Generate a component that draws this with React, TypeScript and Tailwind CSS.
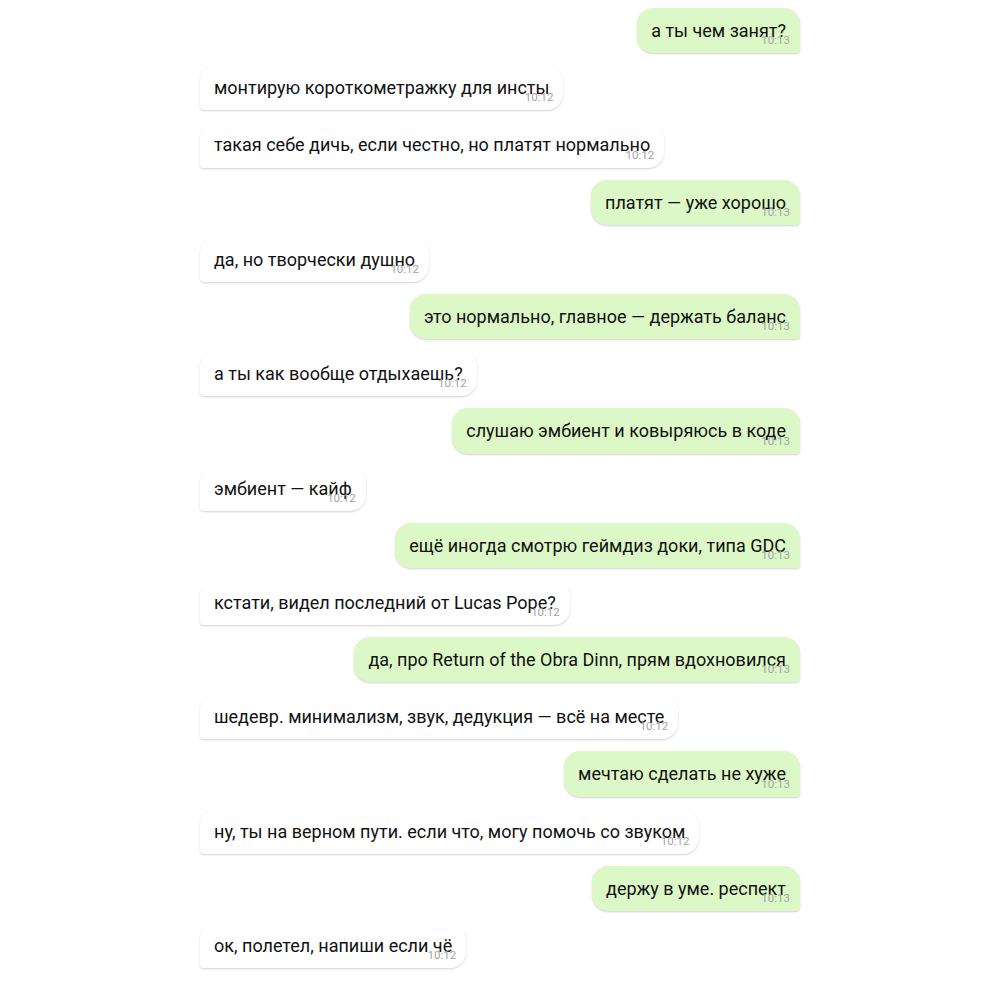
import React from "react";

type Msg = { text: string; time: string; out: boolean };

const messages: Msg[] = [
  { text: "а ты чем занят?", time: "10:13", out: true },
  { text: "монтирую короткометражку для инсты", time: "10:12", out: false },
  { text: "такая себе дичь, если честно, но платят нормально", time: "10:12", out: false },
  { text: "платят — уже хорошо", time: "10:13", out: true },
  { text: "да, но творчески душно", time: "10:12", out: false },
  { text: "это нормально, главное — держать баланс", time: "10:13", out: true },
  { text: "а ты как вообще отдыхаешь?", time: "10:12", out: false },
  { text: "слушаю эмбиент и ковыряюсь в коде", time: "10:13", out: true },
  { text: "эмбиент — кайф", time: "10:12", out: false },
  { text: "ещё иногда смотрю геймдиз доки, типа GDC", time: "10:13", out: true },
  { text: "кстати, видел последний от Lucas Pope?", time: "10:12", out: false },
  { text: "да, про Return of the Obra Dinn, прям вдохновился", time: "10:13", out: true },
  { text: "шедевр. минимализм, звук, дедукция — всё на месте", time: "10:12", out: false },
  { text: "мечтаю сделать не хуже", time: "10:13", out: true },
  { text: "ну, ты на верном пути. если что, могу помочь со звуком", time: "10:12", out: false },
  { text: "держу в уме. респект", time: "10:13", out: true },
  { text: "ок, полетел, напиши если чё", time: "10:12", out: false },
];

const Bubble = ({ m }: { m: Msg }) => (
  <div className={m.out ? "flex justify-end" : "flex justify-start"}>
    <div
      className={
        m.out
          ? "relative bg-[#dcf8c6] rounded-[16px] rounded-br-[4px] px-[14px] py-[10px] shadow-[0_1px_2px_rgba(0,0,0,0.18)]"
          : "relative bg-white rounded-[16px] rounded-bl-[4px] px-[14px] py-[10px] shadow-[0_1px_2px_rgba(0,0,0,0.18)]"
      }
    >
      <p className="text-[18px] leading-[1.4] text-[#111] whitespace-nowrap">{m.text}</p>
      <span className="absolute right-[10px] bottom-[6px] text-[11.5px] leading-[13px] text-[#a3a3a3]">
        {m.time}
      </span>
    </div>
  </div>
);

export default function App() {
  return (
    <div className="min-h-screen bg-white" style={{ fontFamily: "Roboto, 'Noto Sans', sans-serif" }}>
      <div className="w-[600px] mx-auto pt-[8px] pb-[8px] flex flex-col gap-[12px]">
        {messages.map((m, i) => (
          <Bubble key={i} m={m} />
        ))}
      </div>
    </div>
  );
}
